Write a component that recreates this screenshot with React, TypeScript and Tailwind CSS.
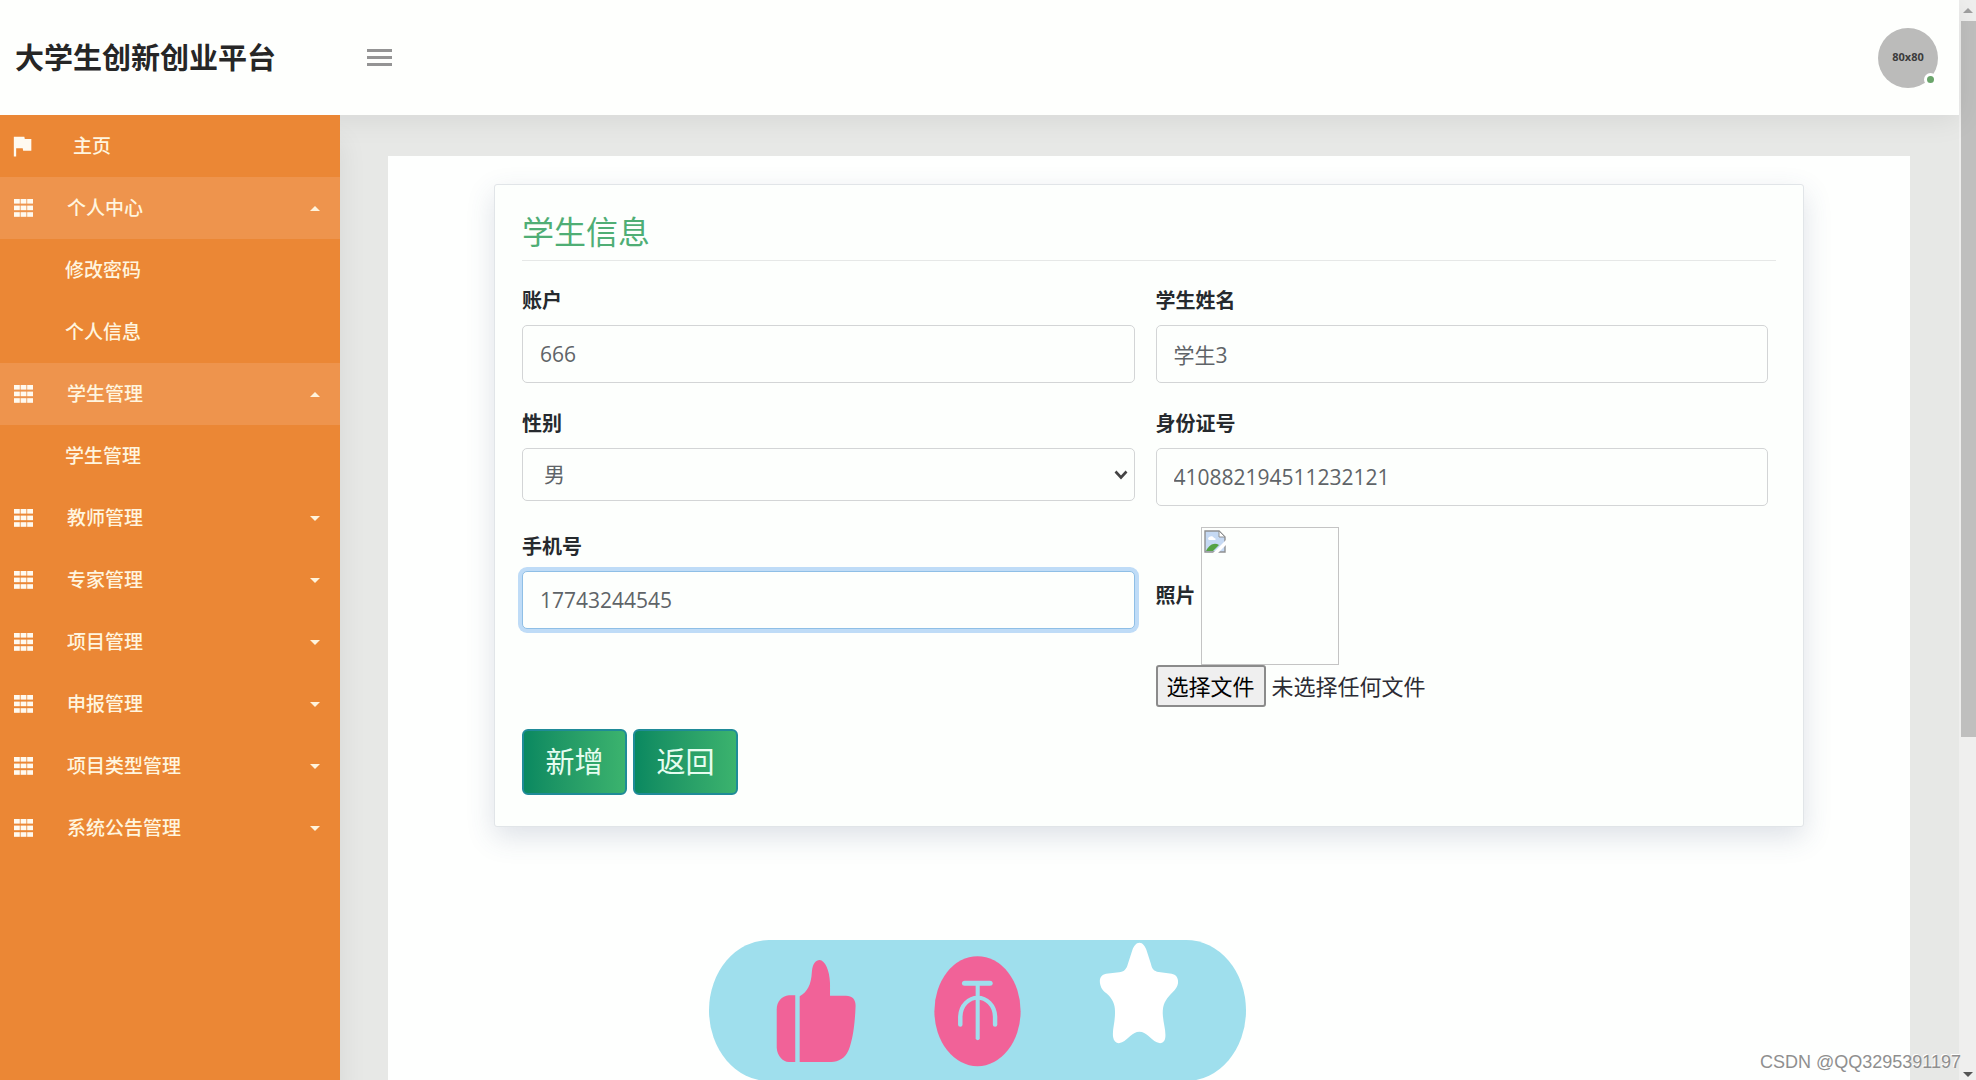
import { useState } from "react";
import { MdFlag } from "react-icons/md";

type MenuItem = {
  name: string;
  open?: boolean;
  children?: string[];
};

const menu: MenuItem[] = [
  { name: "个人中心", open: true, children: ["修改密码", "个人信息"] },
  { name: "学生管理", open: true, children: ["学生管理"] },
  { name: "教师管理" },
  { name: "专家管理" },
  { name: "项目管理" },
  { name: "申报管理" },
  { name: "项目类型管理" },
  { name: "系统公告管理" },
];

const inputClass =
  "block w-full h-[58px] px-[17px] rounded-[5px] border border-[#d3d5d6] bg-[#fdfffd] text-[21px] text-[#5f6468] outline-none focus:border-[#8fbfe6] focus:shadow-[0_0_0_4px_#bfdcf7]";

const labelClass = "block h-[30px] mb-[9px] text-xl leading-[30px] font-bold text-[#262a2e]";

function GridIcon() {
  return (
    <svg viewBox="0 0 19 18" className="w-[19px] h-[18px] shrink-0" fill="#fffaf0">
      {[0, 6.6, 13.2].map((y) =>
        [0, 6.6, 13.2].map((x) => <rect key={`${x}-${y}`} x={x} y={y} width="5.8" height="4.6" />)
      )}
    </svg>
  );
}

function Caret({ up }: { up?: boolean }) {
  return (
    <svg viewBox="0 0 10 5" className="w-2.5 h-[5px] shrink-0" fill="#fff3dc">
      <path d={up ? "M0 5L5 0L10 5Z" : "M0 0L5 5L10 0Z"} />
    </svg>
  );
}

function Header() {
  return (
    <header className="relative z-10 flex items-center h-[115px] shrink-0 pl-[15px] pr-[21px] bg-[#fefffd] shadow-[0_4px_28px_rgba(0,0,0,0.08)]">
      <h1 className="w-[352px] text-[29px] font-bold text-[#262626]">大学生创新创业平台</h1>
      <button type="button" aria-label="菜单" className="flex flex-col gap-1">
        <span className="block w-[25px] h-[3px] bg-[#949494]" />
        <span className="block w-[25px] h-[3px] bg-[#949494]" />
        <span className="block w-[25px] h-[3px] bg-[#949494]" />
      </button>
      <div className="relative flex items-center justify-center size-[60px] ml-auto rounded-full bg-[#bbbbba] text-[11px] font-bold text-[#3c3c3c]">
        80x80
        <span className="absolute right-px bottom-0.5 size-[13px] rounded-full border-[3px] border-white bg-[#6aa56a]" />
      </div>
    </header>
  );
}

function Sidebar() {
  return (
    <nav className="relative z-20 w-[340px] shrink-0 bg-[#eb8735] text-[19px] font-medium text-[#fff5df] shadow-[4px_24px_24px_rgba(0,0,0,0.06)]">
      <a href="#home" className="flex items-center h-[62px] pl-2">
        <MdFlag className="size-7 shrink-0 text-[#fffaf0]" />
        <span className="ml-[37px]">主页</span>
      </a>
      {menu.map(({ name, open, children }) => (
        <div key={name}>
          <button
            type="button"
            className={
              open
                ? "flex items-center w-full h-[62px] pl-3.5 pr-5 bg-[#ee944d]"
                : "flex items-center w-full h-[62px] pl-3.5 pr-5"
            }
          >
            <GridIcon />
            <span className="ml-[34px] mr-auto">{name}</span>
            <Caret up={open} />
          </button>
          {children?.map((child) => (
            <a key={child} href="#page" className="flex items-center h-[62px] pl-[65px]">
              {child}
            </a>
          ))}
        </div>
      ))}
    </nav>
  );
}

function BrokenImage() {
  return (
    <svg viewBox="0 0 22 23" className="w-[22px] h-[23px]">
      <path d="M1 1H15L21 7V22H1Z" fill="#c5d9f3" stroke="#8e9091" strokeWidth="1.4" />
      <path d="M15 1V7H21Z" fill="#fff" stroke="#8e9091" />
      <path d="M4 9C4 6 9 5 10 8C12 8 12 10 11 10H5Z" fill="#fff" />
      <path d="M2 21C5 15 10 12 15 15L9 21Z" fill="#55a244" />
      <path d="M9 23L22 10V15L14 23Z" fill="#fff" />
    </svg>
  );
}

function StudentForm() {
  const [gender, setGender] = useState("男");

  return (
    <form className="px-[27px] pt-6 pb-[31px] rounded-[3px] border border-[#e1e5e8] bg-[#fdfffd] shadow-[0_10px_28px_rgba(60,80,120,0.17)]">
      <h2 className="pb-[5px] border-b border-[#e6e8e7] text-[32px] leading-[46px] text-[#4fae75]">
        学生信息
      </h2>
      <div className="grid grid-cols-2 gap-x-[21px] gap-y-[21px] mt-5 pr-2">
        <div className="pt-[5px]">
          <label htmlFor="account" className={labelClass}>账户</label>
          <input id="account" defaultValue="666" className={inputClass} />
        </div>
        <div className="pt-[5px]">
          <label htmlFor="name" className={labelClass}>学生姓名</label>
          <input id="name" defaultValue="学生3" className={inputClass} />
        </div>
        <div className="pt-[5px]">
          <label htmlFor="gender" className={labelClass}>性别</label>
          <div className="relative">
            <select
              id="gender"
              value={gender}
              onChange={(e) => setGender(e.target.value)}
              className="block w-full h-[53px] px-[21px] appearance-none rounded-[5px] border border-[#d3d5d6] bg-[#fdfffd] text-[21px] text-[#5f6468]"
            >
              <option>男</option>
              <option>女</option>
            </select>
            <svg
              viewBox="0 0 14 10"
              className="absolute right-[7px] top-[22px] w-3.5 h-2.5 pointer-events-none"
              fill="none"
              stroke="#444"
              strokeWidth="2.6"
            >
              <path d="M1.500 1.500L7 7.500L12.500 1.500" />
            </svg>
          </div>
        </div>
        <div className="pt-[5px]">
          <label htmlFor="idcard" className={labelClass}>身份证号</label>
          <input id="idcard" defaultValue="410882194511232121" className={inputClass} />
        </div>
        <div className="pt-[5px]">
          <label htmlFor="phone" className={labelClass}>手机号</label>
          <input
            id="phone"
            defaultValue="17743244545"
            className="block w-full h-[58px] px-[17px] rounded-[5px] border border-[#8fbfe6] bg-[#fdfffd] text-[21px] text-[#5f6468] outline-none shadow-[0_0_0_4px_#bfdcf7]"
          />
        </div>
        <div>
          <div className="flex items-center gap-[5px]">
            <label htmlFor="photo" className="text-xl font-bold text-[#262a2e]">照片</label>
            <div className="size-[138px] p-0.5 border border-[#c4c4c4]">
              <BrokenImage />
            </div>
          </div>
          <div className="flex items-center gap-1.5 text-[22px] text-[#2c2c34]">
            <input id="photo" type="file" className="sr-only" />
            <label
              htmlFor="photo"
              className="flex items-center justify-center w-[110px] h-[42px] rounded-[3px] border-2 border-[#8b8b8b] bg-[#efefef] text-black"
            >
              选择文件
            </label>
            <span>未选择任何文件</span>
          </div>
        </div>
      </div>
      <div className="flex gap-1.5 mt-[22px]">
        <button
          type="submit"
          className="w-[105px] h-[66px] rounded-md border-2 border-[#1f8b98] bg-linear-to-r from-[#078860] to-[#3cb46e] bg-origin-border text-[29px] text-[#e6fdf0]"
        >
          新增
        </button>
        <button
          type="button"
          className="w-[105px] h-[66px] rounded-md border-2 border-[#1f8b98] bg-linear-to-r from-[#078860] to-[#3cb46e] bg-origin-border text-[29px] text-[#e6fdf0]"
        >
          返回
        </button>
      </div>
    </form>
  );
}

// Like / coin / favourite strip floating over the bottom of the page
function ActionBar() {
  return (
    <div className="absolute inset-x-0 -bottom-px z-30 flex justify-center pr-1 pointer-events-none">
      <svg viewBox="0 0 1451 423" preserveAspectRatio="none" className="w-[537px] h-[141px]">
        <rect width="1451" height="423" rx="162" ry="211" fill="#9fdfed" />
        <g transform="translate(-52 -60)">
          <g fill="#f16298">
            <path d="M285 226H268C248 228 235 245 235 268V384C237 408 250 425 268 426H285Z" />
            <path d="M297 229C318 215 328 195 330 155C332 130 341 120 351 120C365 121 378 150 379 190V227H422C440 228 449 238 448 260C446 320 439 365 429 391C420 415 402 426 382 426H297Z" />
            <ellipse cx="777.500" cy="273.500" rx="116.500" ry="165" />
          </g>
          <g fill="none" stroke="#9fdfed" strokeLinecap="round">
            <path d="M743 190H811" strokeWidth="15" />
            <path d="M778 192V355" strokeWidth="11" />
            <path d="M731 314V290C732 255 755 233 778 233C801 233 824 255 825 290V314" strokeWidth="12" />
          </g>
          <path
            d="M1215 68C1206 68 1200 78 1196 90L1184 131C1180 148 1173 155 1160 157L1125 161C1110 164 1106 178 1109 193C1112 209 1120 215 1128 222C1143 238 1150 253 1149 280C1149 310 1141 330 1144 352C1146 368 1157 373 1168 367C1186 357 1196 335 1215 335C1234 335 1244 357 1262 367C1273 373 1284 368 1285 352C1287 330 1279 310 1278 280C1278 253 1285 240 1300 222C1308 212 1316 206 1319 191C1321 176 1316 164 1302 161L1267 156C1254 153 1249 147 1246 131L1234 90C1230 78 1224 68 1215 68Z"
            fill="#fff"
          />
        </g>
      </svg>
    </div>
  );
}

function Scrollbar() {
  return (
    <div className="flex flex-col items-center w-[17px] shrink-0 bg-[#efefee]">
      <div className="flex items-center justify-center h-[21px]">
        <svg viewBox="0 0 10 5" className="w-2.5 h-[5px]" fill="#a0a0a0">
          <path d="M0 5L5 0L10 5Z" />
        </svg>
      </div>
      <div className="w-[15px] h-[66.3%] ml-auto mb-auto bg-[#bfbfbe]" />
      <div className="flex items-center justify-center h-3">
        <svg viewBox="0 0 10 5" className="w-2.5 h-[5px]" fill="#555">
          <path d="M0 0L5 5L10 0Z" />
        </svg>
      </div>
    </div>
  );
}

export default function App() {
  return (
    <div className="relative flex h-screen overflow-hidden bg-[#e7e8e6] font-['Open_Sans','Noto_Sans_CJK_SC',sans-serif]">
      <div className="relative flex flex-col flex-1 min-w-0">
        <Header />
        <div className="flex flex-1 min-h-0">
          <Sidebar />
          <main className="flex flex-1 min-w-0 pl-12 pr-[49px] pt-[41px]">
            <div className="flex-1 min-w-0 px-[106px] pt-7 bg-[#fefffe]">
              <StudentForm />
            </div>
          </main>
        </div>
        <ActionBar />
      </div>
      <Scrollbar />
      <p className="absolute right-[15px] bottom-1 z-40 font-['Liberation_Sans',sans-serif] text-lg text-[#8f8f8f] [text-shadow:-1px_-1px_0_#fff]">
        CSDN @QQ3295391197
      </p>
    </div>
  );
}
